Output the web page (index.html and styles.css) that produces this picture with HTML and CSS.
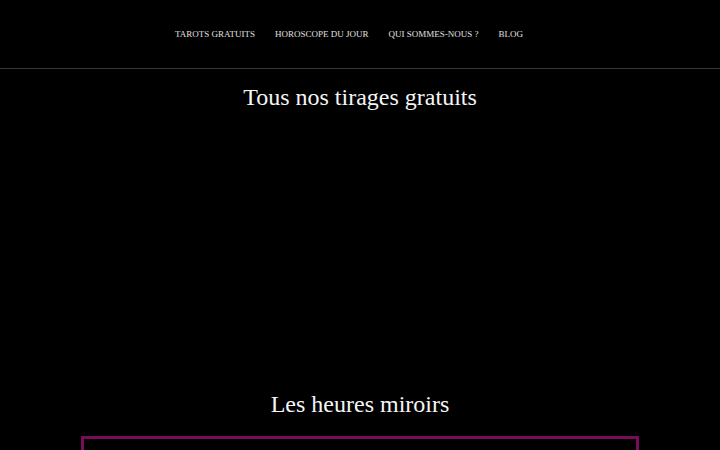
FILE: index.html
```html
<!DOCTYPE html>
<html lang="fr">
<head>
<meta charset="utf-8">
<title>Tarots gratuits</title>
<link rel="stylesheet" href="styles.css">
</head>
<body>
<header class="site-header">
  <nav class="main-nav">
    <a class="nav-link" href="#">Tarots gratuits</a>
    <a class="nav-link" href="#">Horoscope du jour</a>
    <a class="nav-link" href="#">Qui sommes-nous ?</a>
    <a class="nav-link" href="#">Blog</a>
  </nav>
</header>
<main class="content">
  <section class="tirages">
    <h2 class="section-title">Tous nos tirages gratuits</h2>
    <div class="tirages-grid"></div>
  </section>
  <section class="heures">
    <h2 class="section-title">Les heures miroirs</h2>
    <div class="heures-box"></div>
  </section>
</main>
</body>
</html>
```
FILE: styles.css
```css
html, body {
  margin: 0;
  padding: 0;
  background: #000;
  color: #f2f2f2;
  font-family: "Liberation Serif", "Times New Roman", serif;
}

.site-header {
  height: 68px;
  border-bottom: 1px solid #3b3636;
  display: flex;
  align-items: center;
  justify-content: center;
}

.main-nav {
  display: flex;
  gap: 20px;
  padding-right: 22px;
}

.nav-link {
  color: #e0e0e0;
  text-decoration: none;
  text-transform: uppercase;
  font-size: 9px;
  line-height: 12px;
}

.content {
  display: flex;
  flex-direction: column;
}

.section-title {
  margin: 0;
  text-align: center;
  font-weight: normal;
  font-size: 24px;
  line-height: 30px;
  color: #f5f5f5;
}

.tirages {
  padding-top: 13px;
}

.tirages-grid {
  height: 277px;
}

.heures-box {
  margin: 17px 81px 0;
  height: 60px;
  border: 3px solid #7b0c5c;
  border-bottom: none;
}
```
